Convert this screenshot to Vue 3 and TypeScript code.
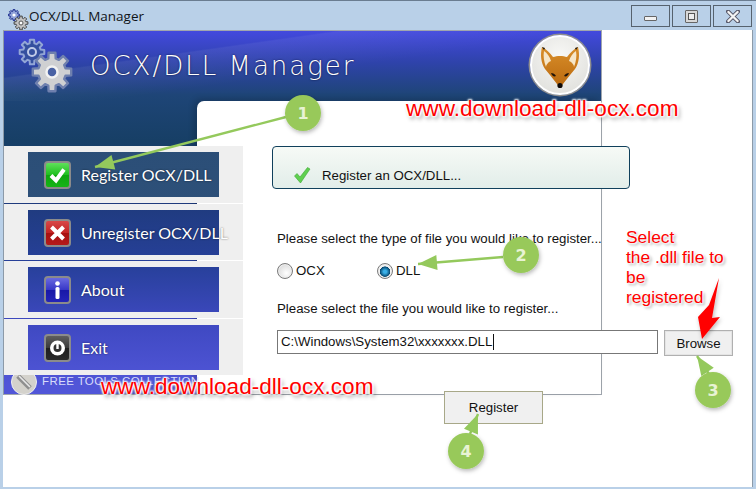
<script setup lang="ts">
// gear outline, used for the banner and the title bar icon
function gearPath(cx: number, cy: number, outer: number, inner: number, teeth: number): string {
  const pts: string[] = [];
  const step = (Math.PI * 2) / teeth;
  for (let i = 0; i < teeth; i++) {
    const a = i * step;
    const offs: [number, number][] = [
      [-0.34, inner],
      [-0.22, outer],
      [0.22, outer],
      [0.34, inner],
    ];
    for (const [o, r] of offs) {
      const x = cx + Math.cos(a + o * step) * r;
      const y = cy + Math.sin(a + o * step) * r;
      pts.push(x.toFixed(1) + ' ' + y.toFixed(1));
    }
  }
  return 'M' + pts.join('L') + 'Z';
}

// green callout arrow: shaft end, then tip
function arrowHead(x1: number, y1: number, x2: number, y2: number): string {
  const len = Math.hypot(x2 - x1, y2 - y1);
  const ux = (x2 - x1) / len;
  const uy = (y2 - y1) / len;
  const bx = x2 - ux * 19;
  const by = y2 - uy * 19;
  const w = 7.5;
  return [
    x2 + ',' + y2,
    bx - uy * w + ',' + (by + ux * w),
    bx + uy * w + ',' + (by - ux * w),
  ].join(' ');
}

const navItems = [
  { label: 'Register OCX/DLL', kind: 'ok', active: true },
  { label: 'Unregister OCX/DLL', kind: 'no', active: false },
  { label: 'About', kind: 'info', active: false },
  { label: 'Exit', kind: 'exit', active: false },
];

const callouts = [
  { n: 1, cx: 303, cy: 113, x1: 286, y1: 117, x2: 95, y2: 167 },
  { n: 2, cx: 521, cy: 255, x1: 503, y1: 257, x2: 418, y2: 264 },
  { n: 3, cx: 713, cy: 390, x1: 709, y1: 374, x2: 697, y2: 356 },
  { n: 4, cx: 466, cy: 451, x1: 470, y1: 434, x2: 478, y2: 414 },
];

const smallGear = gearPath(28, 51, 12.5, 9, 8);
const bigGear = gearPath(48, 71, 19.5, 14, 8);
const iconGearA = gearPath(10, 11, 5.5, 4, 8);
const iconGearB = gearPath(17, 19, 7, 5, 8);
</script>

<template>
  <div class="window">
    <header class="titlebar">
      <svg class="title-icon" width="26" height="28" viewBox="0 0 26 28">
        <path :d="iconGearA" fill="#8fa0d8" stroke="#1a2a8c" stroke-width="1" />
        <circle cx="10" cy="11" r="1.6" fill="#fff" />
        <path :d="iconGearB" fill="#c4c4c4" stroke="#444" stroke-width="1" />
        <circle cx="17" cy="19" r="2" fill="#fff" stroke="#555" />
      </svg>
      <span class="title-text">OCX/DLL Manager</span>
      <div class="win-buttons">
        <div class="win-btn"><span class="glyph-min"></span></div>
        <div class="win-btn"><span class="glyph-max"></span></div>
        <div class="win-btn">
          <svg width="14" height="13" viewBox="0 0 14 13">
            <path d="M2 1.5 12 11.5M12 1.5 2 11.5" stroke="#556" stroke-width="4" stroke-linecap="round" />
            <path d="M2.4 2 11.6 11M11.6 2 2.4 11" stroke="#f4f4f4" stroke-width="2.4" stroke-linecap="round" />
          </svg>
        </div>
      </div>
    </header>

    <main class="client">
      <section class="app">
        <div class="banner">
          <svg class="gears" width="76" height="100" viewBox="0 0 76 100">
            <path :d="smallGear" fill="#35509f" stroke="#93a6d6" stroke-width="2" stroke-linejoin="round" />
            <circle cx="28" cy="51" r="4" fill="#35509f" stroke="#c0cbe8" stroke-width="2" />
            <path :d="bigGear" fill="#cfd0d2" stroke="#6f80ae" stroke-width="2.4" stroke-linejoin="round" />
            <circle cx="48" cy="71" r="5.5" fill="#4a62a4" stroke="#f2f2f2" stroke-width="2.5" />
          </svg>
          <h1 class="brand">OCX/DLL Manager</h1>
          <div class="fox">
            <svg width="46" height="48" viewBox="0 0 46 48">
              <defs>
                <linearGradient id="fur" x1="0" y1="0" x2="0" y2="1">
                  <stop offset="0" stop-color="#d98f2a" />
                  <stop offset="1" stop-color="#b9680f" />
                </linearGradient>
              </defs>
              <path
                d="M5 6 C9 8 13 12 16 16 C20 14.5 26 14.5 30 16 C33 12 37 8 41 6 C43 14 42 22 38 28 C33 34 28 40 23 47 C18 40 13 34 8 28 C4 22 3 14 5 6Z"
                fill="url(#fur)"
              />
              <path d="M7 10 C10 12 13 16 14 20 C11 21 9 24 9 26 C7 21 6 15 7 10Z" fill="#f6e6c8" />
              <path d="M39 10 C36 12 33 16 32 20 C35 21 37 24 37 26 C39 21 40 15 39 10Z" fill="#f6e6c8" />
              <path d="M5 6 7 9 8 7Z M41 6 39 9 38 7Z" fill="#1c140c" />
              <path d="M14 32 C16 32 18 33 19 35 C17 36 15 35 14 32Z M32 32 C30 32 28 33 27 35 C29 36 31 35 32 32Z" fill="#20140a" />
              <circle cx="23" cy="44.5" r="2.6" fill="#0d0907" />
            </svg>
          </div>
        </div>
        <div class="panel"></div>
        <footer class="foot">
          <span class="foot-badge">
            <svg width="18" height="18" viewBox="0 0 18 18">
              <path d="M3 3 15 15" stroke="#8f8f8f" stroke-width="5" />
              <path d="M4 3 15 14" stroke="#e8e8e8" stroke-width="1.6" />
            </svg>
          </span>
          <span class="foot-text">FREE TOOLS COLLECTION</span>
        </footer>
      </section>

      <nav class="sidebar">
        <div v-for="item in navItems" :key="item.label" class="nav-row">
          <div class="nav-btn" :class="{ active: item.active }">
            <span class="nav-icon" :class="item.kind">
              <svg v-if="item.kind === 'ok'" width="23" height="24" viewBox="0 0 23 24">
                <path d="M5 12.5 10 17.5 18 6.5" fill="none" stroke="#fff" stroke-width="4" />
              </svg>
              <svg v-else-if="item.kind === 'no'" width="23" height="24" viewBox="0 0 23 24">
                <path d="M5.5 6 17.5 18M17.5 6 5.5 18" stroke="#fff" stroke-width="4" />
              </svg>
              <svg v-else-if="item.kind === 'info'" width="23" height="24" viewBox="0 0 23 24">
                <circle cx="11.5" cy="5.5" r="2.3" fill="#fff" />
                <rect x="9.5" y="9" width="4" height="12" rx="1.5" fill="#fff" />
              </svg>
              <svg v-else width="23" height="24" viewBox="0 0 23 24">
                <circle cx="11.5" cy="12" r="7.5" fill="#fff" />
                <circle cx="11.5" cy="12" r="4" fill="#333" />
                <rect x="10.3" y="6" width="2.4" height="7" fill="#fff" />
              </svg>
            </span>
            <span class="nav-label">{{ item.label }}</span>
          </div>
        </div>
      </nav>

      <form class="form" @submit.prevent>
        <div class="status">
          <svg width="18" height="18" viewBox="0 0 18 18">
            <path d="M1.5 10 4 7.5 7 11 14.5 1.5 17 3 7.5 17Z" fill="#5fd04f" stroke="#3ea636" stroke-width=".6" />
          </svg>
          <span>Register an OCX/DLL...</span>
        </div>
        <p class="prompt first">Please select the type of file you would like to register...</p>
        <div class="radios">
          <label class="radio"><span class="dot"></span>OCX</label>
          <label class="radio"><span class="dot on"></span>DLL</label>
        </div>
        <p class="prompt second">Please select the file you would like to register...</p>
        <div class="file-row">
          <div class="path">C:\Windows\System32\xxxxxxx.DLL<span class="caret"></span></div>
          <button type="button" class="browse">Browse</button>
        </div>
        <div class="submit-row">
          <button type="button" class="register">Register</button>
        </div>
      </form>
    </main>

    <!-- annotations drawn on top of the screenshot -->
    <svg class="notes" width="756" height="489" viewBox="0 0 756 489">
      <defs>
        <filter id="soft" x="-40%" y="-40%" width="180%" height="180%">
          <feDropShadow dx="1" dy="2" stdDeviation="2" flood-color="#000" flood-opacity=".28" />
        </filter>
      </defs>
      <g v-for="c in callouts" :key="c.n">
        <line :x1="c.x1" :y1="c.y1" :x2="c.x2" :y2="c.y2" stroke="#94c95c" stroke-width="2.4" />
        <polygon :points="arrowHead(c.x1, c.y1, c.x2, c.y2)" fill="#94c95c" />
        <circle :cx="c.cx" :cy="c.cy" r="18" fill="#98c95a" filter="url(#soft)" />
        <text :x="c.cx" :y="c.cy + 6" class="note-num" text-anchor="middle">{{ c.n }}</text>
      </g>
      <polygon points="719,278 709,305 698,317 702,339 720,317 712,318" fill="#f00" filter="url(#soft)" />
    </svg>
    <div class="url url-top">www.download-dll-ocx.com</div>
    <div class="url url-bottom">www.download-dll-ocx.com</div>
    <div class="hint">Select<br />the .dll file to<br />be<br />registered</div>
  </div>
</template>

<style scoped>
* {
  box-sizing: border-box;
}

.window {
  position: relative;
  width: 756px;
  height: 489px;
  display: flex;
  flex-direction: column;
  overflow: hidden;
  padding: 0 3px 2px 3px;
  background: #b9d0e8;
  border-top: 1px solid #6a7c90;
  font-family: "Liberation Sans", Arial, sans-serif;
  color: #111;
}

.titlebar {
  height: 29px;
  flex: none;
  display: flex;
  align-items: flex-start;
}

.title-icon {
  margin: 3px 0 0 1px;
  flex: none;
}

.title-text {
  margin: 6px 0 0 -1px;
  font-family: "Open Sans", sans-serif;
  font-size: 13.5px;
  line-height: 18px;
  color: #101418;
}

.win-buttons {
  margin: 4px 1px 0 auto;
  display: flex;
  gap: 2px;
}

.win-btn {
  width: 39px;
  height: 22px;
  border: 1px solid #56626e;
  display: flex;
  align-items: center;
  justify-content: center;
}

.glyph-min {
  width: 13px;
  height: 5px;
  margin-top: 5px;
  background: #f2f2f2;
  border: 1px solid #666;
  border-radius: 1px;
}

.glyph-max {
  width: 13px;
  height: 13px;
  background: #d8d8d8;
  border: 1px solid #666;
  border-radius: 1px;
  display: flex;
  align-items: center;
  justify-content: center;
}

.glyph-max::after {
  content: "";
  width: 5px;
  height: 5px;
  border: 1px solid #555;
  background: #eee;
}

.client {
  flex: 1;
  min-height: 0;
  background: #fff;
  display: grid;
  grid-template-columns: 1fr;
  grid-template-rows: 1fr;
  border-right: 1px solid #8c9aa8;
}

.client > * {
  grid-area: 1 / 1;
}

/* the gradient is pinned to the page so the buttons continue the backdrop */
.app,
.nav-btn {
  background-attachment: fixed;
  background-image: linear-gradient(
    180deg,
    #4349de 31px,
    #2f43ab 62px,
    #1e4577 95px,
    #173f66 140px,
    #1f3b7e 205px,
    #27409a 265px,
    #3f49c2 325px,
    #5156d8 385px
  );
}

.app {
  width: 599px;
  height: 365px;
  border: 1px solid #a0a6ae;
  border-left: 1px solid #8c9aa8;
  display: grid;
  grid-template-columns: 193px 1fr;
  grid-template-rows: 70px 1fr 19px;
}

.banner {
  grid-column: 1 / 3;
  grid-row: 1;
  position: relative;
  display: flex;
  align-items: flex-start;
  background: linear-gradient(172deg, rgba(255, 255, 255, 0) 30%, rgba(255, 255, 255, 0.06) 31%, rgba(255, 255, 255, 0) 55%);
}

.gears {
  position: absolute;
  left: 0;
  top: -30px;
}

.brand {
  margin: 20px 0 0 86px;
  font-family: "DejaVu Sans", sans-serif;
  font-weight: 200;
  font-size: 26px;
  line-height: 30px;
  letter-spacing: 2px;
  color: #fff;
  text-shadow: 0 0 2px rgba(0, 0, 30, 0.8);
  white-space: nowrap;
}

.fox {
  margin: 4px 11px 0 auto;
  width: 60px;
  height: 60px;
  border-radius: 50%;
  display: flex;
  align-items: center;
  justify-content: center;
  background: radial-gradient(circle at 50% 35%, #f8f8f6, #dcdcd8);
  border: 2px solid #fff;
  box-shadow: 0 0 0 1.5px #8e8e8e;
}

.panel {
  grid-column: 2;
  grid-row: 2 / 4;
  background: #fff;
  border-top-left-radius: 7px;
  box-shadow: -3px -2px 6px rgba(0, 0, 0, 0.18);
}

.foot {
  grid-column: 1;
  grid-row: 3;
  display: flex;
  align-items: center;
  padding-left: 7px;
  gap: 5px;
}

.foot-badge {
  width: 26px;
  height: 26px;
  margin-top: -5px;
  flex: none;
  border-radius: 50%;
  background: #d4d2cc;
  border: 1px solid #efefef;
  display: flex;
  align-items: center;
  justify-content: center;
}

.foot-text {
  margin-top: -7px;
  color: #d8dcfa;
  font-size: 11.5px;
  letter-spacing: 0.4px;
  white-space: nowrap;
}

.sidebar {
  width: 239px;
  margin: 116px 0 0 1px;
  align-self: start;
  display: flex;
  flex-direction: column;
  gap: 1px;
  z-index: 1;
}

.nav-row {
  padding: 6px 24px 6px 24px;
  background: #efefef;
}

.nav-row:nth-child(even) {
  padding-bottom: 5px;
}

.nav-btn {
  height: 45px;
  display: flex;
  align-items: center;
  padding-left: 16px;
  gap: 10px;
  color: #fff;
}

.nav-btn.active {
  background-image: linear-gradient(180deg, #264a74, #37587f);
}

.nav-icon {
  width: 27px;
  height: 28px;
  flex: none;
  border: 2px solid #8b8b8b;
  border-radius: 4px;
  display: block;
}

.nav-icon svg {
  display: block;
}

.nav-icon.ok {
  background: linear-gradient(180deg, #5fe05a 0%, #1fc01f 48%, #0ea60e 52%, #16b416 100%);
}

.nav-icon.no {
  background: linear-gradient(180deg, #d84848 0%, #c42424 48%, #a81010 52%, #b41a1a 100%);
}

.nav-icon.info {
  background: linear-gradient(180deg, #6a6ae0 0%, #3838c8 48%, #1818a8 52%, #2424b8 100%);
}

.nav-icon.exit {
  background: linear-gradient(180deg, #5e5e5e 0%, #3a3a3a 48%, #1e1e1e 52%, #2a2a2a 100%);
}

.nav-label {
  font-family: Lato, sans-serif;
  font-size: 16px;
  white-space: nowrap;
  text-shadow: 0 0 2px rgba(0, 0, 0, 0.6);
}

.form {
  display: flex;
  flex-direction: column;
  align-items: flex-start;
  padding-left: 269px;
  padding-top: 116px;
  z-index: 1;
  font-size: 13.25px;
}

.status {
  width: 358px;
  height: 43px;
  margin-bottom: 41px;
  padding: 19px 0 0 20px;
  display: flex;
  align-items: flex-start;
  gap: 11px;
  border: 1px solid #10405c;
  border-radius: 4px;
  background: linear-gradient(180deg, #f6faf6, #e2ede9);
  line-height: 20px;
}

.status svg {
  flex: none;
}

.prompt {
  margin: 0 0 0 5px;
  line-height: 18px;
  white-space: nowrap;
}

.radios {
  margin: 14px 0 0 5px;
  display: flex;
  gap: 47px;
}

.radio {
  display: flex;
  align-items: center;
  gap: 3px;
  line-height: 18px;
  width: 53px;
}

.dot {
  width: 16px;
  height: 16px;
  flex: none;
  border-radius: 50%;
  border: 1px solid #7a7a7a;
  background: radial-gradient(circle at 60% 65%, #fff, #cfcfcf);
  box-shadow: inset 0 0 0 1px #eee;
}

.dot.on {
  background: radial-gradient(circle at 50% 55%, #3ab0e8 0 1.5px, #04466e 5px, #f2f2f2 5.5px);
}

.prompt.second {
  margin-top: 20px;
}

.file-row {
  margin: 12px 0 0 5px;
  display: flex;
  align-items: flex-start;
  gap: 6px;
}

.path {
  width: 381px;
  height: 24px;
  padding-left: 3px;
  border: 1px solid #777;
  background: #fff;
  line-height: 22px;
  white-space: nowrap;
  display: flex;
  align-items: center;
}

.caret {
  width: 1px;
  height: 16px;
  margin-left: 1px;
  background: #111;
}

.browse,
.register {
  font-family: inherit;
  font-size: 13.25px;
  color: #111;
  background: #f0f0f0;
  padding: 0;
}

.browse {
  width: 69px;
  height: 26px;
  border: 1px solid #b0b0b0;
  box-shadow: inset 0 0 0 1px #e4e4e4;
}

.submit-row {
  margin: 35px 0 0 172px;
}

.register {
  width: 99px;
  height: 33px;
  border: 1px solid #a8a888;
}

.notes {
  position: absolute;
  left: 0;
  top: -1px;
  z-index: 2;
  pointer-events: none;
}

.note-num {
  font-family: "DejaVu Sans", sans-serif;
  font-weight: 700;
  font-size: 16px;
  fill: #e8f3d4;
}

.url {
  position: absolute;
  z-index: 3;
  font-size: 22.6px;
  line-height: 28px;
  color: #f00;
  white-space: nowrap;
  text-shadow:
    0 0 2px #fff,
    1px 1px 2px #fff,
    -1px -1px 2px #fff,
    1px -1px 2px #fff,
    -1px 1px 2px #fff,
    2px 3px 4px rgba(0, 0, 0, 0.45);
}

.url-top {
  left: 406px;
  top: 94px;
}

.url-bottom {
  left: 101px;
  top: 372px;
}

.hint {
  position: absolute;
  z-index: 3;
  left: 626px;
  top: 226px;
  font-size: 17.4px;
  line-height: 20px;
  color: #f00;
  white-space: nowrap;
  text-shadow:
    0 0 2px #fff,
    1px 1px 2px #fff,
    -1px -1px 2px #fff,
    2px 2px 3px rgba(0, 0, 0, 0.4);
}
</style>
